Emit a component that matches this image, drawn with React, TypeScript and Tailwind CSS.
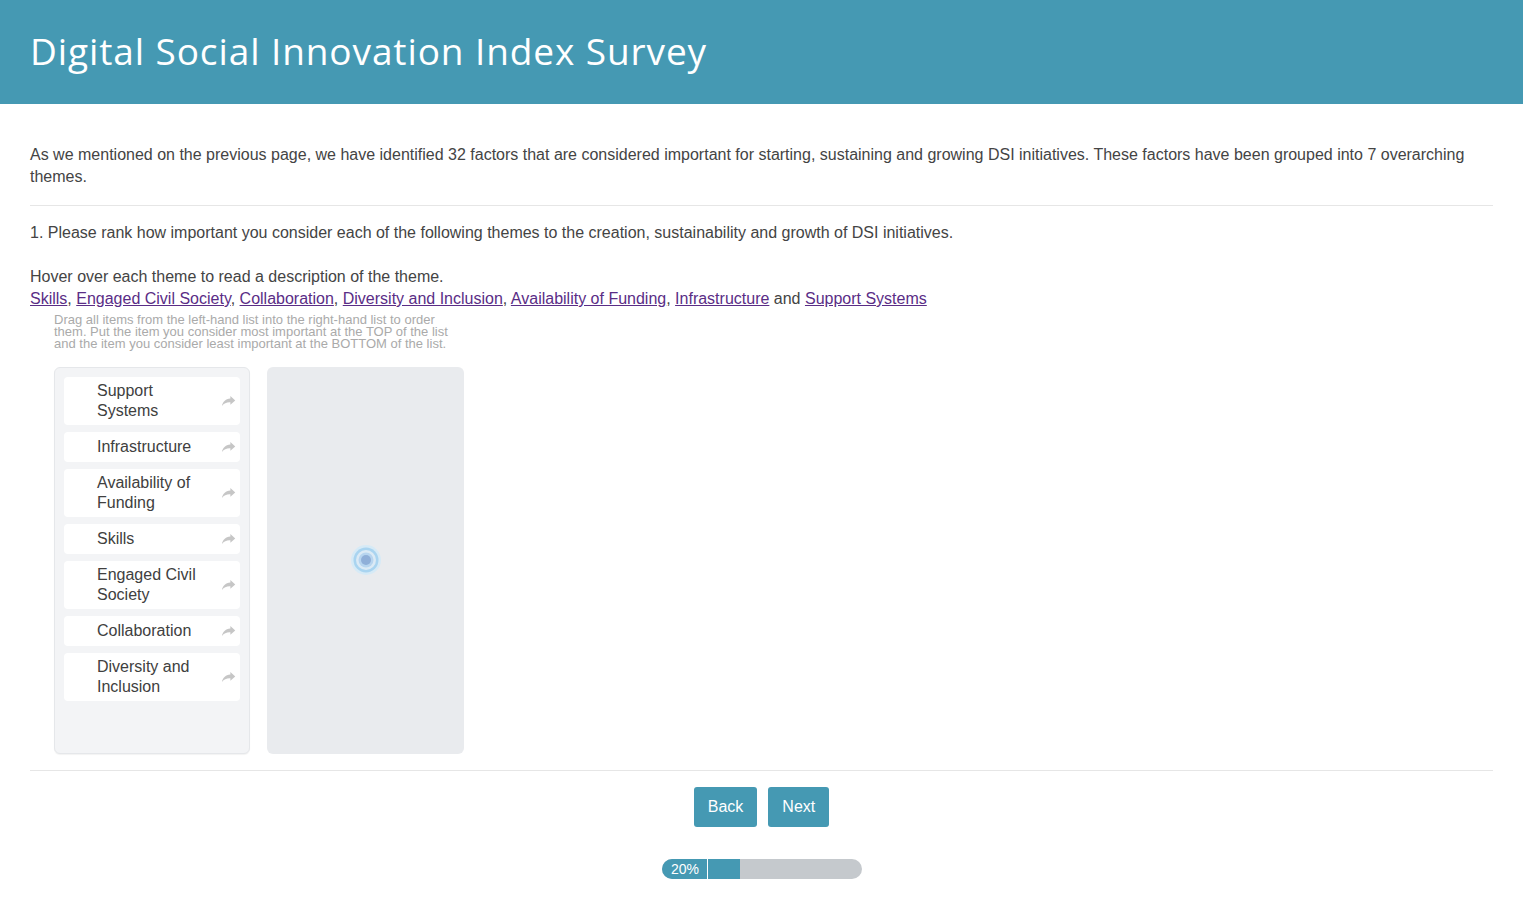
import { ReactNode } from 'react'

const themes = [
  'Support Systems',
  'Infrastructure',
  'Availability of Funding',
  'Skills',
  'Engaged Civil Society',
  'Collaboration',
  'Diversity and Inclusion',
]

const links = [
  'Skills',
  'Engaged Civil Society',
  'Collaboration',
  'Diversity and Inclusion',
  'Availability of Funding',
  'Infrastructure',
]

function ShareArrow() {
  return (
    <svg className="w-[15px] h-[15px] shrink-0" viewBox="0 0 16 16" fill="#c6c6c6">
      <path d="M10 2.2 L15.2 6.8 L10 11.4 V8.8 C6.2 8.6 3.2 9.8 1 12.8 C1.8 8.4 4.6 5.3 10 4.8 Z" />
    </svg>
  )
}

function ThemeItem({ label }: { label: string }) {
  return (
    <div className="flex items-center justify-between bg-white rounded-[4px] pl-[33px] pr-[4px] py-[4px] min-h-[30px]">
      <span className="text-[16px] leading-[20px] text-[#404040] max-w-[115px]">{label}</span>
      <ShareArrow />
    </div>
  )
}

function Spinner() {
  return (
    <svg className="w-8 h-8" viewBox="0 0 32 32">
      <circle cx="16" cy="16" r="15" fill="#d6eaf6" />
      <circle cx="16" cy="16" r="12.5" fill="#a9d4f0" />
      <circle cx="16" cy="16" r="10" fill="#dbeaf5" />
      <circle cx="16" cy="16" r="7.5" fill="#b7d5ef" />
      <circle cx="16" cy="16" r="5" fill="#8fafd8" />
    </svg>
  )
}

function Button({ children }: { children: ReactNode }) {
  return (
    <button className="h-[40px] px-[14px] bg-[#4599b3] text-white text-[16px] rounded-[3px]">
      {children}
    </button>
  )
}

export default function App() {
  return (
    <div className="min-h-screen bg-white font-['Liberation_Sans',Arial,sans-serif] text-[#444]">
      <header className="h-[104px] bg-[#4599b3] flex items-center px-[30px]">
        <h1 className="font-['Open_Sans',sans-serif] text-white text-[37px] tracking-[0.9px] pb-[2px]">
          Digital Social Innovation Index Survey
        </h1>
      </header>

      <main className="px-[30px] pt-[40px]">
        <p className="text-[16px] leading-[22px] pr-[20px]">
          As we mentioned on the previous page, we have identified 32 factors that are considered important for starting, sustaining and growing DSI initiatives. These factors have been grouped into 7 overarching themes.
        </p>

        <hr className="mt-[17px] border-t border-[#e6e6e6]" />

        <div className="pt-[16px] text-[16px] leading-[22px]">
          <p>1. Please rank how important you consider each of the following themes to the creation, sustainability and growth of DSI initiatives.</p>
          <p className="mt-[22px]">Hover over each theme to read a description of the theme.</p>
          <p>
            {links.map((l, i) => (
              <span key={l}>
                <a href="#" className="text-[#5a2d86] underline">{l}</a>
                {i < links.length - 1 ? ', ' : ' and '}
              </span>
            ))}
            <a href="#" className="text-[#5a2d86] underline">Support Systems</a>
          </p>
        </div>

        <div className="pl-[24px] pt-[4px]">
          <p className="text-[13px] leading-[12px] text-[#aaaaaa] w-[395px]">
            Drag all items from the left-hand list into the right-hand list to order them. Put the item you consider most important at the TOP of the list and the item you consider least important at the BOTTOM of the list.
          </p>

          <div className="flex gap-[17px] mt-[17px]">
            <div className="w-[196px] h-[387px] bg-[#f3f4f6] border border-[#e5e7ea] rounded-[6px] p-[9px] flex flex-col gap-[7px] shadow-[0_1px_1px_rgba(0,0,0,0.05)]">
              {themes.map((t) => (
                <ThemeItem key={t} label={t} />
              ))}
            </div>
            <div className="w-[197px] h-[387px] bg-[#e9ebee] rounded-[6px] flex items-center justify-center pb-[1px]">
              <Spinner />
            </div>
          </div>
        </div>

        <hr className="mt-[16px] border-t border-[#e6e6e6]" />

        <div className="flex justify-center gap-[11px] mt-[16px]">
          <Button>Back</Button>
          <Button>Next</Button>
        </div>

        <div className="flex justify-center mt-[32px]">
          <div className="w-[200px] h-[20px] rounded-full bg-[#c5c9cd] overflow-hidden flex">
            <div className="w-[45px] h-full bg-[#4599b3] text-white text-[14px] leading-[20px] text-center pl-[2px]">20%</div>
            <div className="w-px h-full bg-white" />
            <div className="w-[32px] h-full bg-[#4599b3]" />
          </div>
        </div>
      </main>
    </div>
  )
}
